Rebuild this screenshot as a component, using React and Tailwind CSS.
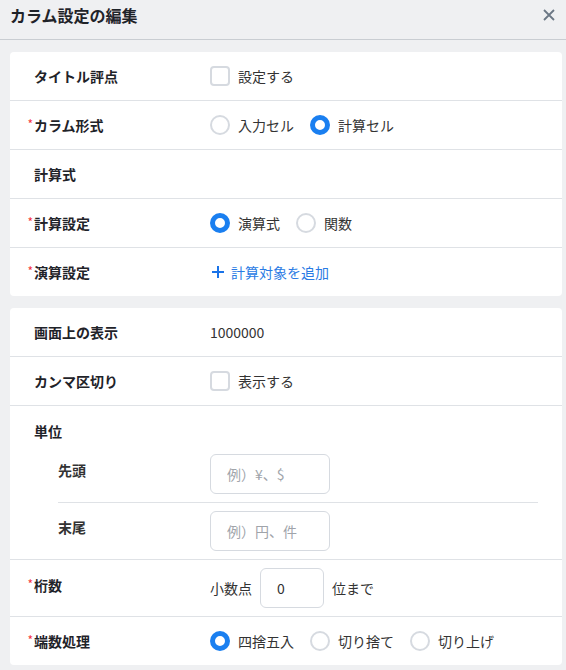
import { useState } from "react";

const FONT = { fontFamily: '"Noto Sans CJK JP", "Noto Sans", sans-serif' };

function Radio({ checked, label }) {
  return (
    <label className="flex items-center gap-2 cursor-pointer">
      {checked ? (
        <span className="w-5 h-5 rounded-full border-[5px] border-[#1a7ff0] bg-white" />
      ) : (
        <span className="w-5 h-5 rounded-full border-2 border-[#d6dae0] bg-white" />
      )}
      <span className="text-[14px] text-[#333]">{label}</span>
    </label>
  );
}

function Checkbox({ label }) {
  return (
    <label className="flex items-center gap-2 cursor-pointer">
      <span className="w-5 h-5 rounded-[4px] border-2 border-[#d6dae0] bg-white" />
      <span className="text-[14px] text-[#333]">{label}</span>
    </label>
  );
}

function Label({ required, children }) {
  return (
    <div className="w-[200px] shrink-0 pl-[14px] flex items-start">
      <span className="w-[10px] mt-[2px] text-[12px] leading-[14px] text-[#f5333f] text-right pr-[1px]">
        {required ? "*" : ""}
      </span>
      <span className="text-[14px] font-bold text-[#1f2329] leading-5">{children}</span>
    </div>
  );
}

function Row({ required, label, children, last, className = "h-[49px]" }) {
  return (
    <div
      className={`flex items-center ${className} ${last ? "" : "border-b border-[#dfe2e6]"}`}
    >
      <Label required={required}>{label}</Label>
      <div className="flex items-center gap-4">{children}</div>
    </div>
  );
}

export default function App() {
  const [decimals, setDecimals] = useState("0");

  return (
    <div className="min-h-[670px] bg-[#eff0f2]" style={FONT}>
      {/* header */}
      <div className="h-10 border-b border-[#c9cdd2] flex items-start justify-between pl-[10px] pr-[11px] pt-[3px]">
        <h1 className="text-[16px] font-bold text-[#1f2329] leading-6">カラム設定の編集</h1>
        <button className="w-6 h-6 flex items-center justify-end">
          <svg width="12" height="12" viewBox="0 0 12 12">
            <path d="M1 1l10 10M11 1L1 11" stroke="#6b7785" strokeWidth="1.8" />
          </svg>
        </button>
      </div>

      <div className="pl-[10px] pr-[4px] pt-3 flex flex-col gap-3">
        {/* card 1 */}
        <div className="bg-white rounded-[4px]">
          <Row label="タイトル評点">
            <Checkbox label="設定する" />
          </Row>
          <Row required label="カラム形式">
            <Radio label="入力セル" />
            <Radio checked label="計算セル" />
          </Row>
          <Row label="計算式" />
          <Row required label="計算設定">
            <Radio checked label="演算式" />
            <Radio label="関数" />
          </Row>
          <Row required label="演算設定" last className="h-[48px]">
            <button className="flex items-center gap-[6px] text-[14px] text-[#2a7be4]">
              <svg width="14" height="14" viewBox="0 0 14 14" className="ml-[1px]">
                <path d="M7 1v12M1 7h12" stroke="#1a73e8" strokeWidth="2" />
              </svg>
              計算対象を追加
            </button>
          </Row>
        </div>

        {/* card 2 */}
        <div className="bg-white rounded-[4px]">
          <Row label="画面上の表示">
            <span className="text-[14px] text-[#333]">1000000</span>
          </Row>
          <Row label="カンマ区切り">
            <Checkbox label="表示する" />
          </Row>
          <div className="border-b border-[#dfe2e6]">
            <div className="pt-[15px]">
              <Label>単位</Label>
            </div>
            <div className="ml-[48px] mr-[24px] mt-[5px]">
              <div className="flex items-center h-[57px] border-b border-[#dfe2e6]">
                <span className="w-[152px] text-[14px] font-bold text-[#333] pb-[7px]">先頭</span>
                <input
                  placeholder="例）¥、$"
                  className="w-[120px] h-10 rounded-[6px] border border-[#d6dae0] px-4 text-[14px] placeholder:text-[#a0a4aa] outline-none"
                />
              </div>
              <div className="flex items-center h-[56px]">
                <span className="w-[152px] text-[14px] font-bold text-[#333] pb-[7px]">末尾</span>
                <input
                  placeholder="例）円、件"
                  className="w-[120px] h-10 rounded-[6px] border border-[#d6dae0] px-4 text-[14px] placeholder:text-[#a0a4aa] outline-none"
                />
              </div>
            </div>
          </div>
          <div className="flex items-center h-[57px] border-b border-[#dfe2e6]">
            <div className="pb-[6px]">
              <Label required>桁数</Label>
            </div>
            <div className="flex items-center gap-2 text-[14px] text-[#333]">
              <span>小数点</span>
              <input
                value={decimals}
                onChange={(e) => setDecimals(e.target.value)}
                className="w-16 h-10 rounded-[6px] border border-[#d6dae0] px-4 text-[14px] text-[#333] outline-none"
              />
              <span>位まで</span>
            </div>
          </div>
          <Row required label="端数処理" last className="h-[48px]">
            <Radio checked label="四捨五入" />
            <Radio label="切り捨て" />
            <Radio label="切り上げ" />
          </Row>
        </div>
      </div>
    </div>
  );
}
